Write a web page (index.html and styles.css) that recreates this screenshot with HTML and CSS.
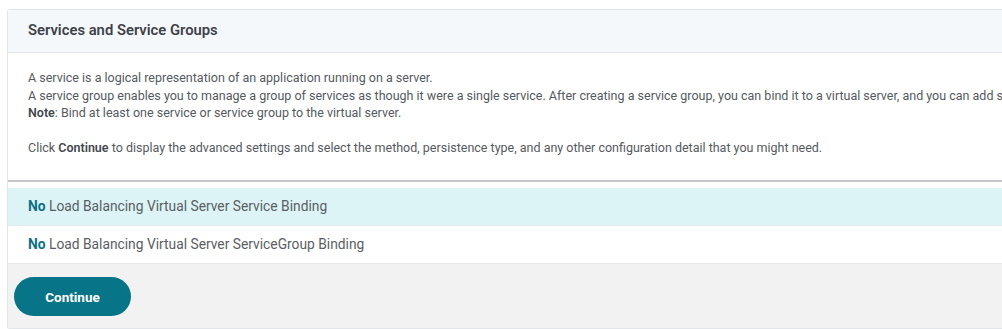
FILE: index.html
```html
<!DOCTYPE html>
<html>
<head>
<meta charset="utf-8">
<link rel="stylesheet" href="styles.css">
</head>
<body>
<div class="panel">
  <div class="panel-header">Services and Service Groups</div>
  <div class="panel-body">
    <p class="desc">A service is a logical representation of an application running on a server.<br>A service group enables you to manage a group of services as though it were a single service. After creating a service group, you can bind it to a virtual server, and you can add services to the group.<br><b>Note</b>: Bind at least one service or service group to the virtual server.</p>
    <p class="desc">Click <b>Continue</b> to display the advanced settings and select the method, persistence type, and any other configuration detail that you might need.</p>
  </div>
  <div class="bindings">
    <div class="binding active"><span class="no">No</span> Load Balancing Virtual Server Service Binding</div>
    <div class="binding"><span class="no">No</span> Load Balancing Virtual Server ServiceGroup Binding</div>
  </div>
  <div class="panel-footer">
    <button class="btn-primary">Continue</button>
  </div>
</div>
</body>
</html>
```
FILE: styles.css
```css
html, body {
  margin: 0;
  padding: 0;
  background: #ffffff;
  overflow: hidden;
}
body {
  padding: 9px 0 0 7px;
  font-family: Roboto, "Liberation Sans", sans-serif;
  color: #555a60;
}
.panel {
  width: 1200px;
  border: 1px solid #e2e5ea;
  border-right: none;
  border-radius: 3px 0 0 3px;
  background: #fff;
}
.panel-header {
  background: #f5f8fb;
  border-bottom: 1px solid #e2e5ea;
  height: 42px;
  line-height: 40px;
  padding-left: 20px;
  font-size: 14.8px;
  font-weight: 600;
  color: #3e4249;
}
.panel-body {
  padding: 16px 20px 23px 20px;
  border-bottom: 2px solid #c4c6c9;
}
.desc {
  margin: 0;
  font-size: 12.5px;
  line-height: 17.5px;
  white-space: nowrap;
}
.desc + .desc {
  margin-top: 17.5px;
}
.desc b {
  font-weight: 600;
  color: #44484e;
}
.bindings {
  padding-top: 6px;
}
.binding {
  height: 37px;
  line-height: 37px;
  padding-left: 20px;
  font-size: 13.8px;
  border-bottom: 1px solid #e6e8eb;
  color: #5a5e64;
}
.binding.active {
  background: #dcf4f5;
}
.no {
  font-weight: 700;
  color: #0b7086;
}
.panel-footer {
  background: #f2f2f2;
  height: 64px;
  display: flex;
  align-items: center;
  padding-left: 6px;
}
.btn-primary {
  width: 117px;
  height: 39px;
  border: none;
  border-radius: 20px;
  background: #077587;
  color: #fff;
  font-family: Roboto, "Liberation Sans", sans-serif;
  font-size: 13.5px;
  font-weight: 700;
  margin-top: 2px;
}
```
